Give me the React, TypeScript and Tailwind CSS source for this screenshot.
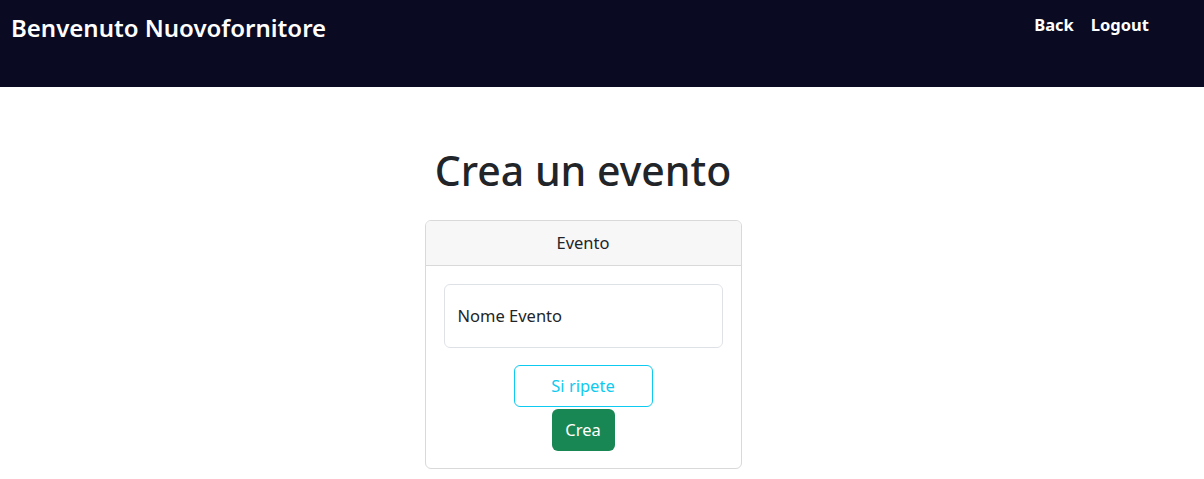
import React from 'react';

const App: React.FC = () => {
  return (
    <div className="min-h-screen bg-white font-['Noto_Sans',sans-serif] text-[#212529]">
      {/* Navbar */}
      <nav className="h-[87px] bg-[#0a0a23] flex items-start justify-between">
        <h3 className="text-white text-[24px] font-semibold leading-[29px] pl-[11px] pt-[13px]">
          Benvenuto Nuovofornitore
        </h3>
        <div className="flex gap-[17px] pt-[13px] pr-[55px]">
          <a href="#" className="text-white text-[16.5px] font-bold leading-[24px]">Back</a>
          <a href="#" className="text-white text-[16.5px] font-bold leading-[24px]">Logout</a>
        </div>
      </nav>

      {/* Contenuto */}
      <div className="w-[1166px] flex flex-col items-center">
        <h1 className="text-[41px] font-medium leading-[48px] mt-[59px] mb-[26px]">Crea un evento</h1>

        <div className="w-[317px] border border-[#d9d9d9] rounded-[6px] overflow-hidden">
          <div className="h-[45px] bg-[#f7f7f7] border-b border-[#d9d9d9] flex items-center justify-center text-[16.5px]">
            Evento
          </div>
          <div className="px-[18px] pt-[18px] pb-[17px] flex flex-col items-center">
            <div className="w-full h-[64px] border border-[#dee2e6] rounded-[6px] flex items-center px-[13px] text-[16.5px]">
              Nome Evento
            </div>
            <button className="mt-[17px] w-[139px] h-[42px] border border-[#0dcaf0] rounded-[6px] text-[#0dcaf0] text-[16.5px]">
              Si ripete
            </button>
            <button className="mt-[2px] w-[63px] h-[42px] bg-[#198754] rounded-[6px] text-white text-[16.5px]">
              Crea
            </button>
          </div>
        </div>
      </div>
    </div>
  );
};

export default App;
